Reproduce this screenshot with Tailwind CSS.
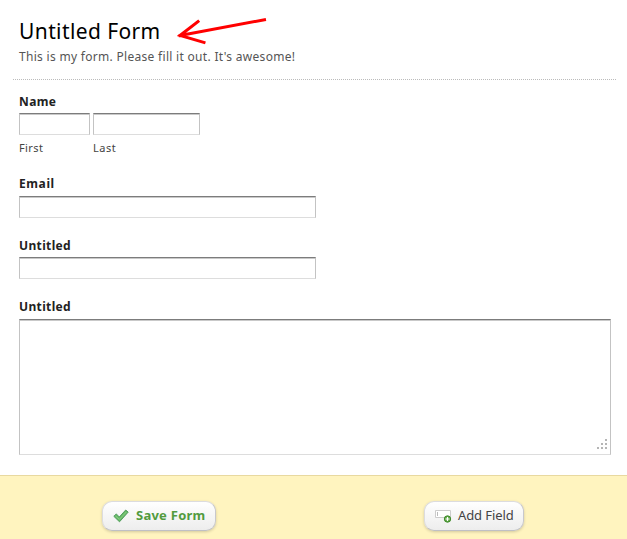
<!DOCTYPE html>
<html lang="en">
<head>
<meta charset="utf-8">
<title>Untitled Form</title>
<script src="https://cdn.jsdelivr.net/npm/@tailwindcss/browser@4"></script>
</head>
<body class="bg-white font-['Noto_Sans',sans-serif] text-[#222]">
<main class="relative flex h-[539px] w-[627px] flex-col overflow-hidden">
  <header class="ml-[13px] mr-[11px] h-20 shrink-0 border-b border-dotted border-[#bbb] pl-1.5 pt-[16px]">
    <h1 class="h-[31px] whitespace-nowrap text-[21px] leading-[30px] tracking-[0.4px] text-black">Untitled Form</h1>
    <p class="h-5 whitespace-nowrap text-[12px] leading-5 tracking-[0.3px] text-[#555]">This is my form. Please fill it out. It's awesome!</p>
  </header>
  <svg class="absolute left-[170px] top-[10px]" width="105" height="40" viewBox="170 10 105 40" fill="none" stroke="#f00" stroke-width="3" stroke-linecap="square"><path d="M264.500 19.700L180 35.500M198 21.500L180 35.500L204 42.500"/></svg>
  <form class="flex h-[395px] shrink-0 flex-col pl-[19px] pt-[13px]">
    <div class="flex h-[82px] flex-col">
      <label class="h-5 text-[12px] font-bold leading-[18px] tracking-[0.4px]">Name</label>
      <div class="flex gap-[3px]">
        <div class="w-[71px]"><input class="block h-[22px] w-full border border-[#c3c3c3] border-t-[#7c7c7c] border-b-[#ddd] bg-white shadow-[inset_0_1px_0_#c9c9c9]"><span class="mt-1 block text-[11px] leading-[18px] tracking-[0.4px] text-[#444]">First</span></div>
        <div class="w-[107px]"><input class="block h-[22px] w-full border border-[#c3c3c3] border-t-[#7c7c7c] border-b-[#ddd] bg-white shadow-[inset_0_1px_0_#c9c9c9]"><span class="mt-1 block text-[11px] leading-[18px] tracking-[0.5px] text-[#444]">Last</span></div>
      </div>
    </div>
    <div class="flex h-[62px] flex-col">
      <label class="h-[21px] text-[12px] font-bold leading-[18px] tracking-[0.6px]">Email</label>
      <input class="h-[22px] w-[297px] border border-[#c3c3c3] border-t-[#7c7c7c] border-b-[#ddd] bg-white shadow-[inset_0_1px_0_#c9c9c9]">
    </div>
    <div class="flex h-[61px] flex-col">
      <label class="h-5 text-[12px] font-bold leading-[18px] tracking-[0.35px]">Untitled</label>
      <input class="h-[22px] w-[297px] border border-[#c3c3c3] border-t-[#7c7c7c] border-b-[#ddd] bg-white shadow-[inset_0_1px_0_#c9c9c9]">
    </div>
    <div class="flex flex-col">
      <label class="h-[21px] text-[12px] font-bold leading-[18px] tracking-[0.35px]">Untitled</label>
      <div class="relative h-[136px] w-[592px]">
        <textarea class="block size-full resize-none border border-[#c3c3c3] border-t-[#7c7c7c] border-b-[#ddd] bg-white shadow-[inset_0_1px_0_#c9c9c9]"></textarea>
        <svg class="absolute bottom-[6px] right-[4px]" width="10" height="10" fill="#b5b5b5"><path d="M8 0h2v2H8zM4 4h2v2H4zM8 4h2v2H8zM0 8h2v2H0zM4 8h2v2H4zM8 8h2v2H8z"/></svg>
      </div>
    </div>
  </form>
  <footer class="flex h-16 shrink-0 border-t border-[#e8d9a0] bg-[#fff4bf] pl-[102px] pt-[25px]">
    <button type="button" class="flex h-[30px] w-[114px] items-center rounded-[10px] border border-[#dcdcdf] border-b-[#bfc0c5] border-r-[#c8c8cc] bg-linear-to-b from-white to-[#ededed] pl-[10px] text-[13px] font-bold tracking-[0.25px] text-[#529b3e] shadow-[0_1px_3px_rgba(0,0,0,0.18)]">
      <svg class="mr-[7px] shrink-0" width="16" height="14" viewBox="0 0 16 14"><path d="M.8 7.300L3.300 4.900L6.300 8L12.700 1L15.200 3.100L6.500 12.800Z" fill="#65b765" stroke="#4a9857" stroke-width=".9"/><path d="M2.500 7L6.400 10.400L13.300 3" fill="none" stroke="#8bd184"/></svg>
      <span class="whitespace-nowrap">Save Form</span>
    </button>
    <button type="button" class="ml-[208px] flex h-[30px] w-[100px] items-center rounded-[10px] border border-[#dcdcdf] border-b-[#bfc0c5] border-r-[#c8c8cc] bg-linear-to-b from-white to-[#ededed] pl-[10px] text-[13px] tracking-[-0.1px] text-[#444] shadow-[0_1px_3px_rgba(0,0,0,0.18)]">
      <svg class="mr-[6px] mt-px shrink-0" width="17" height="13" viewBox="0 0 17 13" fill="none"><path d="M.5.500H15.500V7.500H.5Z" fill="#fff" stroke="#ccc"/><path d="M2.500 2V6" stroke="#bbb"/><circle cx="12.500" cy="9" r="3.200" fill="#5fa846" stroke="#3f8a2c"/><path d="M12.500 7V11M10.500 9H14.500" stroke="#fff" stroke-width="1.200"/></svg>
      <span class="whitespace-nowrap">Add Field</span>
    </button>
  </footer>
</main>
</body>
</html>
